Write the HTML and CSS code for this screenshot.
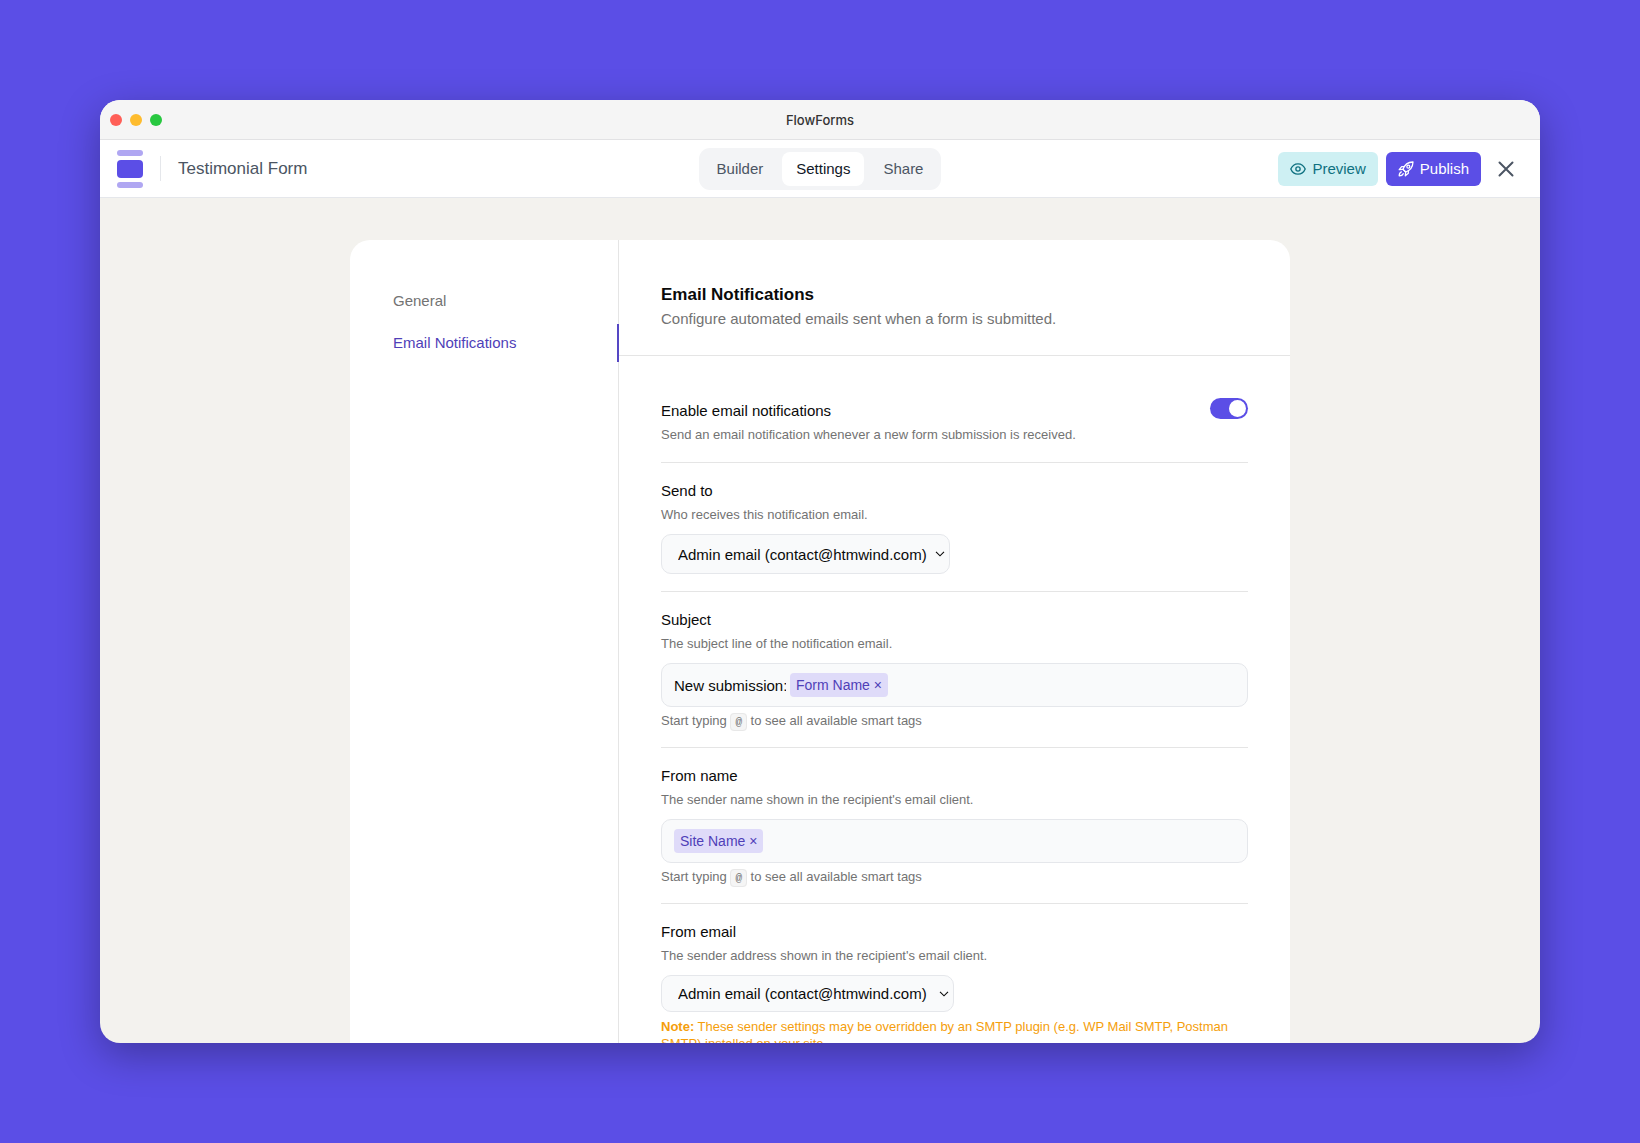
FILE: index.html
```html
<!DOCTYPE html>
<html lang="en">
<head>
  <meta charset="UTF-8">
  <meta name="viewport" content="width=device-width, initial-scale=1">
  <title>FlowForms</title>
  <link rel="stylesheet" href="styles.css">
</head>
<body>
  <div class="window">
    <!-- Window title bar -->
    <div class="titlebar">
      <div class="lights">
        <span class="light light-red"></span>
        <span class="light light-yellow"></span>
        <span class="light light-green"></span>
      </div>
      <div class="titlebar-text">FlowForms</div>
    </div>

    <!-- App header -->
    <header class="topbar">
      <div class="brand">
        <svg class="logo" width="26" height="38" viewBox="0 0 26 38" aria-hidden="true">
          <rect x="0" y="0" width="26" height="6" rx="3" fill="#b0a7f2"/>
          <rect x="0" y="10" width="26" height="18" rx="4" fill="#5b4ee6"/>
          <rect x="0" y="32" width="26" height="6" rx="3" fill="#b0a7f2"/>
        </svg>
        <span class="divider"></span>
        <span class="form-title">Testimonial Form</span>
      </div>

      <nav class="tabs">
        <a class="tab" href="#builder">Builder</a>
        <a class="tab active" href="#settings">Settings</a>
        <a class="tab" href="#share">Share</a>
      </nav>

      <div class="actions">
        <button class="btn btn-preview" type="button">
          <svg width="16" height="16" viewBox="0 0 24 24" fill="none" stroke="currentColor" stroke-width="2" stroke-linecap="round" stroke-linejoin="round" aria-hidden="true">
            <path d="M1.200 12C3.200 7.200 7.200 4.200 12 4.200s8.800 3 10.800 7.800c-2 4.800-6 7.800-10.800 7.800S3.200 16.800 1.200 12z"/>
            <circle cx="12" cy="12" r="3.200"/>
          </svg>
          Preview
        </button>
        <button class="btn btn-publish" type="button">
          <svg width="16" height="16" viewBox="0 0 24 24" fill="none" stroke="currentColor" stroke-width="1.900" stroke-linecap="round" stroke-linejoin="round" aria-hidden="true">
            <path d="M7.500 12.500C9.500 6.500 14.500 1.800 22.500 1.500c-.3 8-5 13-11 15z"/>
            <circle cx="15.500" cy="8.500" r="2.200"/>
            <path d="M9.500 8.500H5.500L1.800 13l5.700-.5M15.500 14.500v4L11 22.200l.5-5.700"/>
            <path d="M7.500 12.500l4 4"/>
            <path d="M5 16.200c-2.200.9-3.200 3-3.200 6 3 0 5.100-1 6-3.200"/>
          </svg>
          Publish
        </button>
        <button class="close" type="button" aria-label="Close">
          <svg width="16" height="16" viewBox="0 0 16 16" fill="none" stroke="currentColor" stroke-width="2" stroke-linecap="round" aria-hidden="true">
            <path d="M1.500 1.500l13 13M14.500 1.500l-13 13"/>
          </svg>
        </button>
      </div>
    </header>

    <main class="content">
      <div class="card">
        <nav class="sidebar">
          <a class="side-link" href="#general">General</a>
          <a class="side-link active" href="#email-notifications">Email Notifications</a>
        </nav>

        <section class="panel">
          <div class="panel-header">
            <h1>Email Notifications</h1>
            <p>Configure automated emails sent when a form is submitted.</p>
          </div>

          <form class="panel-body">
            <div class="row row-toggle">
              <div class="row-text">
                <label class="label" for="enable">Enable email notifications</label>
                <p class="desc">Send an email notification whenever a new form submission is received.</p>
              </div>
              <input class="toggle" type="checkbox" id="enable" checked>
            </div>

            <div class="row">
              <label class="label" for="sendTo">Send to</label>
              <p class="desc">Who receives this notification email.</p>
              <div class="select">
                <select id="sendTo">
                  <option>Admin email (contact@htmwind.com)</option>
                </select>
                <svg class="chevron" width="10" height="6" viewBox="0 0 10 6" fill="none" stroke="currentColor" stroke-width="1.1" aria-hidden="true"><path d="M1 .8l4 4 4-4"/></svg>
              </div>
            </div>

            <div class="row">
              <label class="label" for="subject">Subject</label>
              <p class="desc">The subject line of the notification email.</p>
              <div class="tag-field">
                <input class="tag-text" type="text" id="subject" value="New submission:">
                <span class="tag">Form Name <button type="button" aria-label="Remove Form Name">×</button></span>
              </div>
              <p class="hint">Start typing <kbd>@</kbd> to see all available smart tags</p>
            </div>

            <div class="row">
              <label class="label" for="fromName">From name</label>
              <p class="desc">The sender name shown in the recipient's email client.</p>
              <div class="tag-field">
                <span class="tag">Site Name <button type="button" aria-label="Remove Site Name">×</button></span>
                <input class="tag-input" type="text" id="fromName">
              </div>
              <p class="hint">Start typing <kbd>@</kbd> to see all available smart tags</p>
            </div>

            <div class="row">
              <label class="label" for="fromEmail">From email</label>
              <p class="desc">The sender address shown in the recipient's email client.</p>
              <div class="select select-compact">
                <select id="fromEmail">
                  <option>Admin email (contact@htmwind.com)</option>
                </select>
                <svg class="chevron" width="10" height="6" viewBox="0 0 10 6" fill="none" stroke="currentColor" stroke-width="1.1" aria-hidden="true"><path d="M1 .8l4 4 4-4"/></svg>
              </div>
              <p class="note"><strong>Note:</strong> These sender settings may be overridden by an SMTP plugin (e.g. WP Mail SMTP, Postman SMTP) installed on your site.</p>
            </div>
          </form>
        </section>
      </div>
    </main>
  </div>
</body>
</html>
```
FILE: styles.css
```css
* {
  box-sizing: border-box;
}
html, body {
  margin: 0;
  height: 100%;
}
body {
  padding: 100px;
  background: #5b4ee6;
  font-family: "Liberation Sans", Arial, Helvetica, sans-serif;
  font-size: 15px;
  color: #0a0a0a;
}
h1, p {
  margin: 0;
}
a {
  text-decoration: none;
}
button, input, select {
  font: inherit;
  color: inherit;
}
button {
  border: 0;
  background: none;
  cursor: pointer;
}

/* Window frame */
.window {
  display: flex;
  flex-direction: column;
  height: 100%;
  overflow: hidden;
  border-radius: 20px;
  background: #f3f2ee;
  box-shadow: 0 12px 40px rgba(0, 0, 0, 0.3);
}
.titlebar {
  display: grid;
  grid-template-columns: 1fr auto 1fr;
  align-items: center;
  flex: none;
  height: 40px;
  padding: 0 10px;
  background: #f5f5f5;
  border-bottom: 1px solid #e2e2e4;
}
.lights {
  display: flex;
  gap: 8px;
}
.light {
  width: 12px;
  height: 12px;
  border-radius: 50%;
}
.light-red { background: #ff5f57; }
.light-yellow { background: #febc2e; }
.light-green { background: #28c840; }
.titlebar-text {
  font-family: Inter, sans-serif;
  font-size: 13px;
  font-weight: 500;
  color: #333;
}

/* App header */
.topbar {
  display: grid;
  grid-template-columns: 1fr auto 1fr;
  align-items: center;
  flex: none;
  height: 58px;
  padding: 0 17px;
  background: #fff;
  border-bottom: 1px solid #e5e7eb;
}
.brand {
  display: flex;
  align-items: center;
  gap: 17px;
}
.divider {
  width: 1px;
  height: 25px;
  background: #e5e7eb;
}
.form-title {
  font-size: 17px;
  color: #4b5563;
}
.tabs {
  display: flex;
  gap: 5px;
  padding: 4px;
  border-radius: 11px;
  background: #f3f4f6;
}
.tab {
  padding: 0 14px;
  border-radius: 8px;
  line-height: 34px;
  color: #4b5563;
}
.tab.active {
  background: #fff;
  color: #111827;
}
.actions {
  display: flex;
  justify-content: flex-end;
  align-items: center;
  gap: 8px;
}
.btn {
  display: flex;
  align-items: center;
  gap: 6px;
  height: 34px;
  padding: 0 12px;
  border-radius: 6px;
}
.btn-preview {
  background: #cef0f3;
  color: #0e7180;
}
.btn-publish {
  background: #5b4ee6;
  color: #fff;
}
.close {
  display: grid;
  place-items: center;
  width: 34px;
  height: 34px;
  padding: 0;
  color: #4b5563;
}

/* Settings card */
.content {
  flex: 1;
  min-height: 0;
  padding: 42px 40px 0;
  overflow: hidden;
}
.card {
  display: flex;
  max-width: 940px;
  min-height: 100%;
  margin: 0 auto;
  border-radius: 20px;
  background: #fff;
}
.sidebar {
  display: flex;
  flex-direction: column;
  gap: 4px;
  flex: none;
  width: 269px;
  padding: 42px 0;
  border-right: 1px solid #e5e5e5;
}
.side-link {
  margin-right: -1px;
  padding: 0 43px;
  border-right: 2px solid transparent;
  line-height: 38px;
  color: #737373;
}
.side-link.active {
  border-color: #5547c4;
  color: #4f3fb8;
}
.panel {
  flex: 1;
  min-width: 0;
}
.panel-header {
  padding: 43px 42px 25px;
  border-bottom: 1px solid #e5e5e5;
}
.panel-header h1 {
  margin-bottom: 1px;
  font-size: 17px;
  line-height: 24px;
}
.panel-header p {
  line-height: 22px;
  color: #737373;
}
.panel-body {
  padding: 25px 42px;
}

/* Form rows */
.row {
  padding: 17px 0;
  border-bottom: 1px solid #e5e5e5;
}
.row:last-child {
  border-bottom: 0;
}
.row-toggle {
  display: flex;
  justify-content: space-between;
  align-items: flex-start;
}
.row-text {
  padding: 2px 0 1px;
}
.label {
  display: block;
  margin-bottom: 4px;
  line-height: 22px;
}
.desc, .hint {
  font-size: 13px;
  line-height: 18px;
  color: #737373;
}
.toggle {
  appearance: none;
  display: flex;
  flex: none;
  width: 38px;
  height: 21px;
  margin: 0;
  padding: 2px;
  border-radius: 11px;
  background: #c8c8cc;
}
.toggle::before {
  content: "";
  width: 17px;
  height: 17px;
  border-radius: 50%;
  background: #fff;
}
.toggle:checked {
  justify-content: flex-end;
  background: #5b4ee6;
}
.select {
  position: relative;
  width: fit-content;
  margin-top: 10px;
}
.select select {
  appearance: none;
  display: block;
  height: 40px;
  padding: 0 22px 0 16px;
  border: 1px solid #e5e7eb;
  border-radius: 10px;
  background: #f9fafb;
}
.select-compact select {
  height: 37px;
  padding-right: 26px;
}
/* Arrow over the right end of the select */
.chevron {
  position: absolute;
  top: 0;
  right: 5px;
  bottom: 0;
  margin: auto 0;
  pointer-events: none;
}
.tag-field {
  display: flex;
  align-items: center;
  gap: 4px;
  height: 44px;
  margin: 10px 0 5px;
  padding: 0 12px;
  border: 1px solid #e5e7eb;
  border-radius: 10px;
  background: #f9fafb;
}
.tag-text, .tag-input {
  padding: 0;
  border: 0;
  outline: 0;
  background: none;
}
.tag-text {
  width: 112px;
}
.tag-input {
  flex: 1;
  min-width: 0;
}
.tag {
  padding: 0 6px;
  border-radius: 4px;
  background: #dfdbf9;
  font-size: 14px;
  line-height: 24px;
  color: #4f3fb8;
}
.tag button {
  padding: 0;
}
kbd {
  padding: 2px 4px;
  border: 1px solid #e8e8e8;
  border-radius: 4px;
  background: #f5f5f5;
  font-family: "Liberation Mono", monospace;
  font-size: 11px;
  line-height: 1;
}
.note {
  margin-top: 6px;
  font-size: 13px;
  line-height: 17px;
  color: #f59e0b;
}
```
